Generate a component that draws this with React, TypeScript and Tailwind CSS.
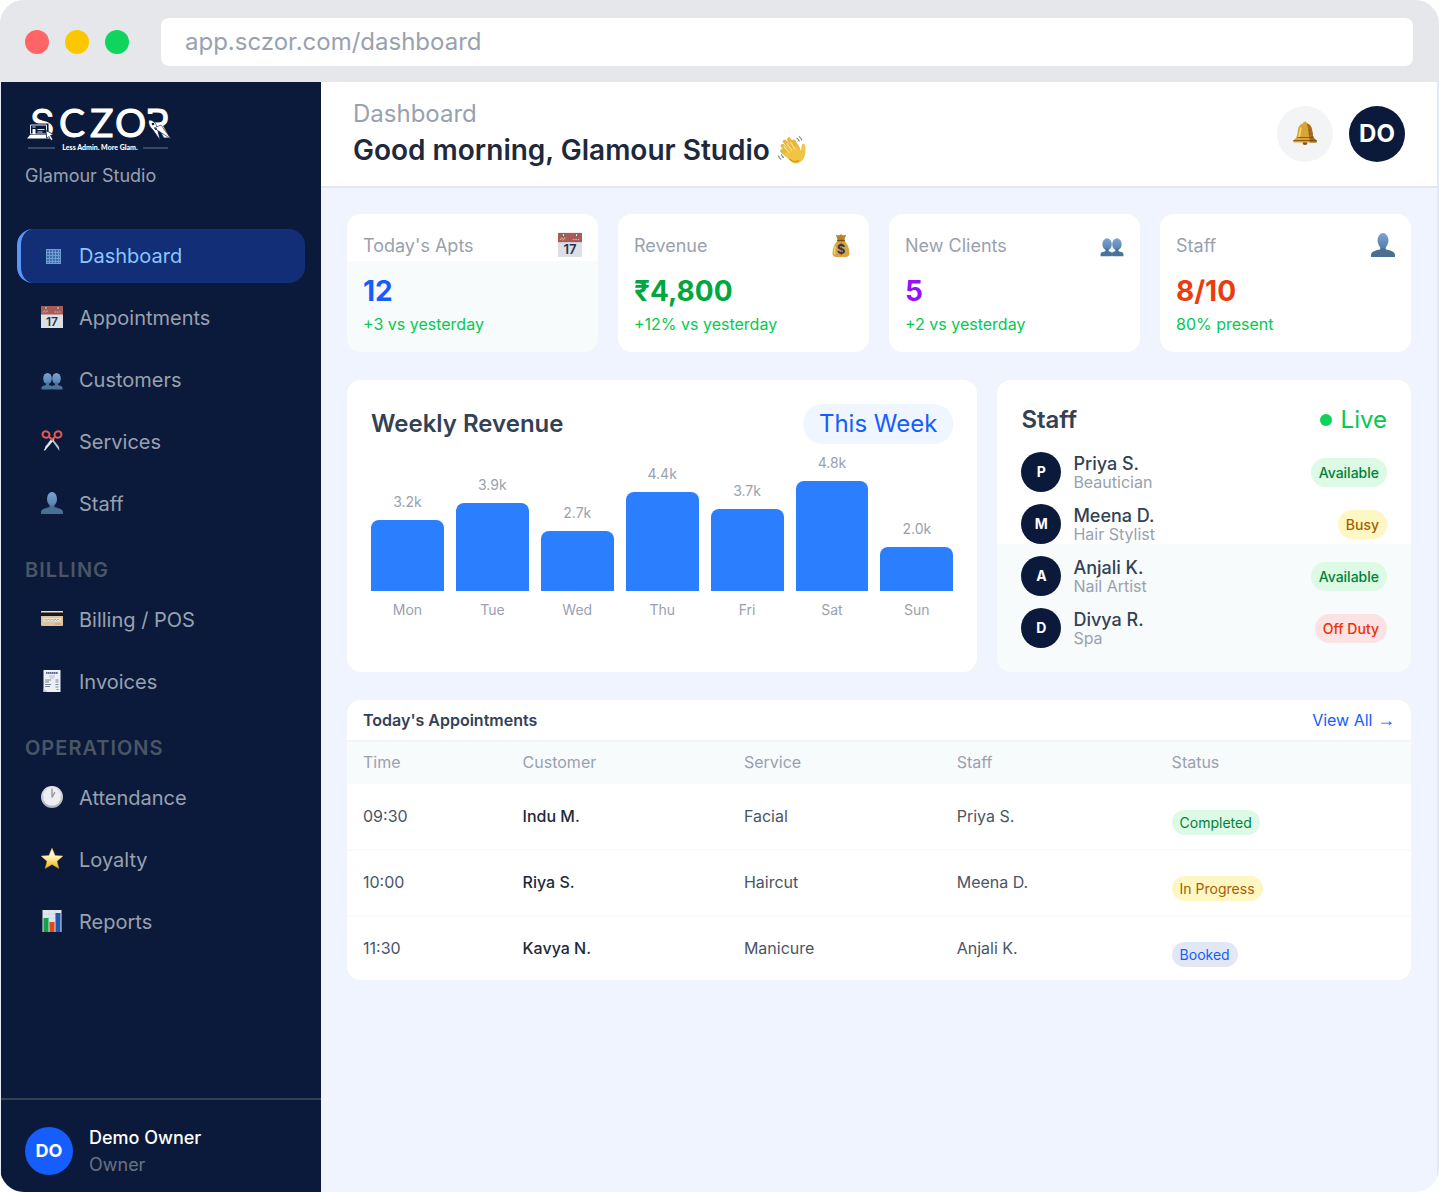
import type { ReactNode } from 'react'
import clsx from 'clsx'

type IconName =
  | 'grid' | 'calendar' | 'people' | 'scissors' | 'person' | 'card'
  | 'receipt' | 'clock' | 'star' | 'chart' | 'bell' | 'money' | 'wave'

const drawings: Record<IconName, ReactNode> = {
  grid: (
    <g stroke="#6d9fd0" strokeWidth="1" fill="none">
      <rect x="5.5" y="4.5" width="14" height="14" fill="#3c68a5" />
      <path d="M8.5 4.5v14M11.5 4.5v14M14.5 4.5v14M17.5 4.5v14M5.5 7.5h14M5.5 10.5h14M5.5 13.5h14M5.5 16.5h14" />
    </g>
  ),
  calendar: (
    <>
      <rect y="-1" width="22" height="22" fill="#dcdfe6" />
      <rect y="-1" width="22" height="8.5" fill="#a95b58" />
      <path d="M2 5.5l1.5-2 1 2 1.5-2 1 2M13.5 5h6" stroke="#dfb080" strokeWidth="1" strokeDasharray="1.5 .8" fill="none" />
      <circle cx="5" cy="1" r="1.2" fill="#fff" stroke="#34405c" strokeWidth=".6" />
      <circle cx="17" cy="1" r="1.2" fill="#fff" stroke="#34405c" strokeWidth=".6" />
      <text x="11" y="18.500" textAnchor="middle" fontSize="12" fontWeight="600" fill="#27324d" fontFamily="Inter, sans-serif">17</text>
    </>
  ),
  people: (
    <>
      <g fill="url(#skin)">
        <ellipse cx="6.500" cy="9.500" rx="4.300" ry="5.500" />
        <ellipse cx="15.500" cy="9.500" rx="4.300" ry="5.500" />
      </g>
      <path d="M.5 20.500v-2c0-1.500 2-2 4.500-2.600V13.500h3v2.400c1.300.4 2.300.6 3 1.200.7-.6 1.700-.8 3-1.200v-2.400h3v2.400c2.500.6 4.500 1.100 4.500 2.600v2H11.400v-.6h-.8v.6z" fill="#4b7298" />
    </>
  ),
  person: (
    <>
      <path d="M8.500 10h5v4c3 1.200 8.500 1.300 8.500 5.500V21H0v-1.500C0 15.300 5.500 15.200 8.500 14z" fill="#4a6f94" />
      <ellipse cx="11" cy="6" rx="5" ry="7" fill="url(#skin)" />
    </>
  ),
  scissors: (
    <>
      <path d="M8.600 6.500L18.500 20l-.6-4.300L11 7zM13.400 6.500L3.500 20l.6-4.300L11 7z" fill="#b9c4d1" />
      <path d="M13.400 8.500L3.500 20l-.2-1.500L11.500 7z" fill="#e6ebf1" />
      <g fill="none" stroke="#e05a52" strokeWidth="2">
        <ellipse cx="5" cy="3.500" rx="3.500" ry="3.200" transform="rotate(25 5 3.500)" />
        <ellipse cx="17" cy="3.500" rx="3.500" ry="3.200" transform="rotate(-25 17 3.500)" />
        <path d="M8 6l3 2.500L14 6" />
      </g>
      <circle cx="11" cy="9" r=".8" fill="#7d8794" />
    </>
  ),
  card: (
    <>
      <rect y="2.500" width="22" height="14.500" rx="1" fill="#ddc49b" />
      <rect y="2" width="22" height="1.500" fill="#f2dfbd" />
      <rect y="3.500" width="22" height="3.500" fill="#17181d" />
      <rect x="2" y="9" width="18" height="3.500" fill="#ece3d2" />
      <path d="M3 11.500L4.500 10 6 11.500 7.500 10 9 11.500l1.500-1.500 1.500 1.500 2-1.500 1.500 1.500 1.500-1.500 1.500 1.500" stroke="#7da0c7" strokeWidth=".8" fill="none" />
      <path d="M14 15h6" stroke="#c39f6c" />
    </>
  ),
  receipt: (
    <>
      <path d="M2.500-1h17v22h-17z" fill="#eceff5" />
      <path d="M5 2h12" stroke="#5b6b93" strokeWidth="2.200" strokeDasharray="1.600 .4" />
      <path d="M8 5h6M9 7h4" stroke="#a4adbf" strokeWidth=".8" />
      <path d="M4 9h6M4 11h4M4 13.500h6M4 15.500h5M14.500 9h3M14.500 11h3M14.500 13.500h3M14.500 16h3M15.500 18.500h2" stroke="#7a859c" strokeWidth="1" />
      <path d="M2.500 17.500l4 3.500h-4z" fill="#c6ccd8" />
    </>
  ),
  clock: (
    <>
      <circle cx="11" cy="10" r="11" fill="url(#steel)" />
      <circle cx="11" cy="10" r="9" fill="#edeef1" />
      <path d="M11 2v8.500L13.800 5.200" fill="none" stroke="#9299a4" strokeWidth="1.400" />
      <path d="M11 1v1M20 10h-1M11 19v-1M2 10h1" stroke="#a9afba" strokeWidth=".8" />
    </>
  ),
  star: (
    <path
      d="M11-.9l3.100 7.300 7.900.6-6 5.200 1.900 7.300L11 15.400l-6.900 4.100L6 12.200 0 7l7.900-.6z"
      fill="url(#gold)" stroke="#dfa92b" strokeWidth=".4" strokeLinejoin="round"
    />
  ),
  chart: (
    <>
      <rect x="1.500" y="-1" width="19" height="22" fill="#dfe6f0" />
      <path d="M2 3h18M2 7h18M2 11h18M8-1v22M14-1v22" stroke="#c3cddb" strokeWidth=".5" />
      <rect x="2.500" y="7" width="5" height="14" fill="#13a344" />
      <rect x="8.500" y="11" width="5" height="10" fill="#e4451c" />
      <rect x="14.500" y="2" width="5" height="19" fill="#2458a8" />
    </>
  ),
  bell: (
    <>
      <ellipse cx="11" cy="19.300" rx="2.200" ry="1.700" fill="#845018" />
      <path d="M11-.5c1 0 1.600.7 1.600 1.700 3.300.9 4.800 3.700 5.100 7.300.3 4 1 6.300 4 8.400v2H.3v-2c3-2.100 3.700-4.400 4-8.400.3-3.600 1.800-6.400 5.100-7.300C9.400.2 10-.5 11-.5z" fill="#dba437" />
      <path d="M12.500 1.200c3.400 1 4.900 3.800 5.200 7.300.3 4 1 6.300 4 8.400v2h-6.200c-1-5-1-12-3-17.700z" fill="#a66d1b" />
      <path d="M7.300 5c-.9 3-.7 7-2.300 10" stroke="#f4d375" strokeWidth="1.600" fill="none" />
      <path d="M.3 17h21.400M4 14.200h14" stroke="#80501a" strokeWidth=".8" />
      <path d="M15 7.500v6M17.500 10v7" stroke="#4e5264" strokeWidth="1" strokeDasharray="1 2" />
    </>
  ),
  money: (
    <>
      <path d="M8 6h6c3 3 4.800 7.500 4.800 11.500 0 2.500-1.500 3.500-3.500 3.500H6.700c-2 0-3.500-1-3.500-3.500C3.200 13.500 5 9 8 6z" fill="#d9a63d" />
      <path d="M6.300.6l2.800.8L11 .3l1.900 1.100 2.800-.8L14 5.500H8z" fill="#b98329" />
      <path d="M7.500 6h7" stroke="#784e1a" strokeWidth="1.400" />
      <path d="M5.800 11.500c-.8 2.500-1 5-.4 7" stroke="#f4d078" strokeWidth="1.300" fill="none" />
      <text x="11" y="18" textAnchor="middle" fontSize="12" fontWeight="700" fill="#2f3a52" fontFamily="Inter, sans-serif">$</text>
    </>
  ),
  wave: (
    <>
      <g stroke="#e9b53a" strokeWidth="3.100" strokeLinecap="round" fill="none">
        <path d="M10 14L3.600 7.700M12 12L5.300 4.300M14 11L8.600 2.700M16 10.500l-3.600-6.200M8.500 16L3.300 11.700" />
      </g>
      <path d="M5 13.500L14.500 8c1.600 2 2.600 3.200 3.500 3.200 1-1.500.1-4.300 1.400-5.100 1.600-.6 2.200 1.700 2.200 4.300 0 5.200-1.300 8.300-4.300 10.300-3.400 2.200-6.700.5-9.300-3z" fill="#f2c444" />
      <path d="M8.500 12.500l-3.700-4M10.700 11L7 6M13 9.700l-3-4.500" stroke="#fadf83" strokeWidth="1.100" strokeLinecap="round" />
      <path d="M9 18c2.500 2.600 5 2.800 7.500 1" stroke="#ce8e27" strokeWidth="1" fill="none" />
      <path d="M14.500 1.500c1.300.7 2 1.700 2.300 3M16.500.3c1.300.9 2 2 2.300 3.400M.3 15.500c.4 1.400 1.100 2.300 2.300 3M2.600 14.500c.3 1.200 1 2 2 2.600" stroke="#68798e" strokeWidth=".8" fill="none" />
    </>
  ),
}

function Icon({ name, className = 'size-[22px]' }: { name: IconName; className?: string }) {
  return (
    <svg viewBox="0 0 22 22" className={clsx('shrink-0 overflow-visible', className)} aria-hidden="true">
      {drawings[name]}
    </svg>
  )
}

// gradients shared by the icons
function IconDefs() {
  return (
    <svg className="absolute size-0" aria-hidden="true">
      <defs>
        <linearGradient id="skin" x1="0" y1="0" x2="0" y2="1">
          <stop offset="0" stopColor="#7ea3d0" />
          <stop offset="1" stopColor="#5480ae" />
        </linearGradient>
        <linearGradient id="steel" x1="0" y1="0" x2="0" y2="1">
          <stop offset="0" stopColor="#e8eaee" />
          <stop offset="1" stopColor="#a9aeb8" />
        </linearGradient>
        <linearGradient id="gold" x1="0" y1="0" x2="0" y2="1">
          <stop offset="0" stopColor="#fffbe4" />
          <stop offset=".45" stopColor="#fff1ad" />
          <stop offset="1" stopColor="#f3ae0d" />
        </linearGradient>
      </defs>
    </svg>
  )
}

function Logo() {
  return (
    <svg width="148" height="46" viewBox="0 0 148 46" role="img" aria-label="SCZOR" className="block overflow-visible">
      <text y="31" fill="#fff" fontSize="39" fontFamily="Lato, sans-serif" stroke="#fff" strokeWidth="1">
        <tspan x="5" fontFamily="Inter, sans-serif" fontSize="38">S</tspan>
        <tspan x="34">C</tspan>
        <tspan x="65">Z</tspan>
        <tspan x="90">O</tspan>
        <tspan x="120" fontFamily="Inter, sans-serif" fontSize="38">R</tspan>
      </text>
      <g>
        <path d="M5 18.500h17.500v10H5z" fill="#0b1a3b" stroke="#0b1a3b" strokeWidth="2" />
        <path d="M5.500 19h16v9h-16z" fill="#0b1a3b" stroke="#dfe4ee" strokeWidth="1" />
        <path d="M5 29h20l2 3.500H2z" fill="#fff" />
        <path d="M7.500 23h3v5h-3z" fill="#fff" />
        <path d="M7.500 21h3M12.500 23.500h7M12.500 26h5" stroke="#dfe4ee" strokeWidth="1" />
        <path d="M21 24.500l7.500 4-3 1 2.500 4-2 1-2.300-4-2 2z" fill="#fff" stroke="#0b1a3b" strokeWidth=".8" />
      </g>
      <g>
        <path d="M121 8h7v25h-7z" fill="#0b1a3b" />
        <path d="M124 14c4 0 7 3 8 7l3 13-7-10c-3-3-5-6-4-10z" fill="#fff" stroke="#0b1a3b" strokeWidth=".6" />
        <path d="M129 22l17 11-10-14z" fill="#fff" stroke="#0b1a3b" strokeWidth=".6" />
        <circle cx="128" cy="18" r="1.300" fill="#0b1a3b" />
        <circle cx="131" cy="23" r="1" fill="#0b1a3b" />
      </g>
      <path d="M3 42h27M118 42h25" stroke="#69758c" strokeWidth="1" />
      <text x="75" y="44" textAnchor="middle" fill="#fff" fontFamily="Lato, sans-serif" fontSize="7" fontWeight="900">Less Admin. More Glam.</text>
    </svg>
  )
}

type NavEntry = { icon: IconName; label: string; active?: boolean }

const sections: { title?: string; items: NavEntry[] }[] = [
  {
    items: [
      { icon: 'grid', label: 'Dashboard', active: true },
      { icon: 'calendar', label: 'Appointments' },
      { icon: 'people', label: 'Customers' },
      { icon: 'scissors', label: 'Services' },
      { icon: 'person', label: 'Staff' },
    ],
  },
  { title: 'BILLING', items: [{ icon: 'card', label: 'Billing / POS' }, { icon: 'receipt', label: 'Invoices' }] },
  {
    title: 'OPERATIONS',
    items: [
      { icon: 'clock', label: 'Attendance' },
      { icon: 'star', label: 'Loyalty' },
      { icon: 'chart', label: 'Reports' },
    ],
  },
]

function Sidebar() {
  return (
    <aside className="flex w-80 shrink-0 flex-col bg-[#0b1a3b]">
      <div className="px-6 pt-6">
        <Logo />
        <p className="mt-2.5 text-lg leading-[27px] text-gray-400">Glamour Studio</p>
      </div>
      <nav className="mt-10 flex flex-1 flex-col gap-2 px-4">
        {sections.map((s, i) => (
          <div key={i} className="flex flex-col gap-2">
            {s.title && <h2 className="mt-4 px-2 text-xl leading-[30px] font-semibold tracking-wider text-gray-600">{s.title}</h2>}
            {s.items.map(item => (
              <a
                key={item.label}
                href="#"
                className={clsx(
                  'flex items-center gap-4 rounded-2xl py-3 text-xl leading-[30px]',
                  item.active ? 'border-l-4 border-[#5b97fb] bg-[#112e76] pl-5 text-[#8ec5ff]' : 'pl-6 text-gray-400'
                )}
              >
                <Icon name={item.icon} />
                {item.label}
              </a>
            ))}
          </div>
        ))}
      </nav>
      <div className="flex items-center gap-4 border-t-2 border-[#364153] px-6 pt-6 pb-3.5">
        <span className="flex size-12 items-center justify-center rounded-full bg-[#155dfc] text-lg font-bold text-white">DO</span>
        <div className="text-lg leading-[27px]">
          <p className="font-medium text-white">Demo Owner</p>
          <p className="text-gray-500">Owner</p>
        </div>
      </div>
    </aside>
  )
}

const stats: { label: string; icon: IconName; value: string; note: string; color: string; bg: string }[] = [
  { label: "Today's Apts", icon: 'calendar', value: '12', note: '+3 vs yesterday', color: 'text-[#155dfc]', bg: 'bg-linear-to-b from-white from-34% to-[#f8fbfc] to-34%' },
  { label: 'Revenue', icon: 'money', value: '₹4,800', note: '+12% vs yesterday', color: 'text-[#00a63e]', bg: 'bg-white' },
  { label: 'New Clients', icon: 'people', value: '5', note: '+2 vs yesterday', color: 'text-[#9810fa]', bg: 'bg-white' },
  { label: 'Staff', icon: 'person', value: '8/10', note: '80% present', color: 'text-[#ea3c0c]', bg: 'bg-white' },
]

const week = [
  { day: 'Mon', value: '3.2k', height: 71 },
  { day: 'Tue', value: '3.9k', height: 88 },
  { day: 'Wed', value: '2.7k', height: 60 },
  { day: 'Thu', value: '4.4k', height: 99 },
  { day: 'Fri', value: '3.7k', height: 82 },
  { day: 'Sat', value: '4.8k', height: 110 },
  { day: 'Sun', value: '2.0k', height: 44 },
]

const badge = {
  green: 'bg-[#dcfae6] text-[#008236]',
  yellow: 'bg-[#fef6c3] text-[#a65f00]',
  red: 'bg-[#fce2e2] text-[#ea3008]',
  blue: 'bg-[#e1e8f3] text-[#155dfc]',
}

const staff = [
  { name: 'Priya S.', role: 'Beautician', status: 'Available', tone: badge.green },
  { name: 'Meena D.', role: 'Hair Stylist', status: 'Busy', tone: badge.yellow },
  { name: 'Anjali K.', role: 'Nail Artist', status: 'Available', tone: badge.green },
  { name: 'Divya R.', role: 'Spa', status: 'Off Duty', tone: badge.red },
]

const appointments = [
  { time: '09:30', customer: 'Indu M.', service: 'Facial', staff: 'Priya S.', status: 'Completed', tone: badge.green },
  { time: '10:00', customer: 'Riya S.', service: 'Haircut', staff: 'Meena D.', status: 'In Progress', tone: badge.yellow },
  { time: '11:30', customer: 'Kavya N.', service: 'Manicure', staff: 'Anjali K.', status: 'Booked', tone: badge.blue },
]

const cardBase = 'rounded-2xl border-2 border-[#f1f4fa]'

function WeeklyRevenue() {
  return (
    <section className={clsx(cardBase, 'col-span-3 bg-white p-6')}>
      <div className="flex items-center justify-between">
        <h2 className="text-2xl font-semibold text-[#334155]">Weekly Revenue</h2>
        <button className="h-10 rounded-full bg-[#eff6ff] px-4 text-2xl text-[#155dfc]">This Week</button>
      </div>
      <div className="mt-2 flex items-end gap-3 text-center text-sm leading-[21px] text-gray-400">
        {week.map(d => (
          <div key={d.day} className="flex flex-1 flex-col gap-2">
            <span>{d.value}</span>
            <div className="rounded-t-lg bg-[#2b7fff]" style={{ height: d.height }} />
            <span>{d.day}</span>
          </div>
        ))}
      </div>
    </section>
  )
}

function StaffCard() {
  return (
    <section className={clsx(cardBase, 'col-span-2 bg-linear-to-b from-white from-56% to-[#f8fbfc] to-56% p-6')}>
      <div className="flex items-center justify-between text-2xl">
        <h2 className="font-semibold text-[#334155]">Staff</h2>
        <span className="flex items-center gap-[9px] text-[#05c951]">
          <i className="size-3 rounded-full bg-[#0bd35c]" />
          Live
        </span>
      </div>
      <ul className="mt-4 flex flex-col gap-3">
        {staff.map(p => (
          <li key={p.name} className="flex items-center gap-3">
            <span className="flex size-10 items-center justify-center rounded-full bg-[#0b1a3b] text-sm font-bold text-white">{p.name[0]}</span>
            <div className="flex-1">
              <p className="text-lg leading-5 font-medium text-[#334155]">{p.name}</p>
              <p className="leading-4 text-gray-400">{p.role}</p>
            </div>
            <span className={clsx('rounded-full px-2 py-1 text-sm leading-[21px] font-medium', p.tone)}>{p.status}</span>
          </li>
        ))}
      </ul>
    </section>
  )
}

function Appointments() {
  return (
    <section className={clsx(cardBase, 'overflow-hidden bg-white')}>
      <div className="flex h-[42px] items-center justify-between border-b-2 border-gray-100 px-4">
        <h2 className="font-semibold text-[#334155]">Today's Appointments</h2>
        <a href="#" className="text-[#155dfc]">
          View All <span className="font-['Liberation_Sans',sans-serif] text-lg leading-none">→</span>
        </a>
      </div>
      <table className="w-full table-fixed text-left">
        <thead className="bg-[#f8fbfc] text-gray-400">
          <tr className="h-[42px]">
            <th className="w-[15%] px-4 pb-0.5 font-normal">Time</th>
            <th className="w-[20.8%] px-4 pb-0.5 font-normal">Customer</th>
            <th className="w-[20%] px-4 pb-0.5 font-normal">Service</th>
            <th className="w-[20.2%] px-4 pb-0.5 font-normal">Staff</th>
            <th className="px-4 pb-0.5 font-normal">Status</th>
          </tr>
        </thead>
        <tbody className="divide-y-2 divide-[#f8fafc] text-[#4a5565]">
          {appointments.map(a => (
            <tr key={a.time} className="h-[66px] last:h-16">
              <td className="px-4 pb-0.5">{a.time}</td>
              <td className="px-4 pb-0.5 font-medium text-[#1e293b]">{a.customer}</td>
              <td className="px-4 pb-0.5">{a.service}</td>
              <td className="px-4 pb-0.5">{a.staff}</td>
              <td className="px-4 pt-2.5">
                <span className={clsx('inline-block rounded-full px-2 py-0.5 align-middle text-sm leading-[21px]', a.tone)}>{a.status}</span>
              </td>
            </tr>
          ))}
        </tbody>
      </table>
    </section>
  )
}

export default function App() {
  return (
    <div className="flex min-h-screen flex-col overflow-hidden rounded-3xl bg-[#f0f4ff] font-[Inter,sans-serif]">
      <IconDefs />
      <div className="flex items-center gap-4 bg-[#e5e7eb] pt-[18px] pr-[26px] pb-4 pl-[25px]">
        <div className="mr-4 flex gap-4">
          <i className="size-6 rounded-full bg-[#ff6467]" />
          <i className="size-6 rounded-full bg-[#fdc700]" />
          <i className="size-6 rounded-full bg-[#0fd45e]" />
        </div>
        <input
          aria-label="Address"
          readOnly
          value="app.sczor.com/dashboard"
          className="h-12 min-w-0 flex-1 rounded-lg bg-white px-6 pb-0.5 text-2xl text-gray-400 outline-none"
        />
      </div>
      <div className="flex flex-1 border-r-2 border-l border-[#e2e8f4]">
        <Sidebar />
        <div className="min-w-0 flex-1">
          <header className="flex items-center justify-between border-b-2 border-[#e5e7eb] bg-white px-8 py-3.5">
            <div className="pb-1">
              <p className="text-2xl leading-9 text-gray-400">Dashboard</p>
              <h1 className="flex items-center gap-2 text-[28px] leading-9 font-semibold text-[#1e293b]">
                Good morning, Glamour Studio
                <Icon name="wave" className="size-7" />
              </h1>
            </div>
            <div className="flex gap-4">
              <button aria-label="Notifications" className="flex size-14 items-center justify-center rounded-full bg-gray-100">
                <Icon name="bell" className="size-6" />
              </button>
              <button className="size-14 rounded-full bg-[#0b1a3b] text-2xl font-bold text-white">DO</button>
            </div>
          </header>
          <main className="flex flex-col gap-6 p-6">
            <div className="grid grid-cols-4 gap-4">
              {stats.map(s => (
                <section key={s.label} className={clsx(cardBase, 'p-4', s.bg)}>
                  <div className="flex h-8 items-center justify-between">
                    <h2 className="text-lg text-gray-400">{s.label}</h2>
                    <Icon name={s.icon} className="size-6" />
                  </div>
                  <p className={clsx('mt-2 text-[28px] leading-[42px] font-bold', s.color)}>{s.value}</p>
                  <p className="text-[#05c951]">{s.note}</p>
                </section>
              ))}
            </div>
            <div className="grid grid-cols-5 gap-4">
              <WeeklyRevenue />
              <StaffCard />
            </div>
            <Appointments />
          </main>
        </div>
      </div>
    </div>
  )
}
